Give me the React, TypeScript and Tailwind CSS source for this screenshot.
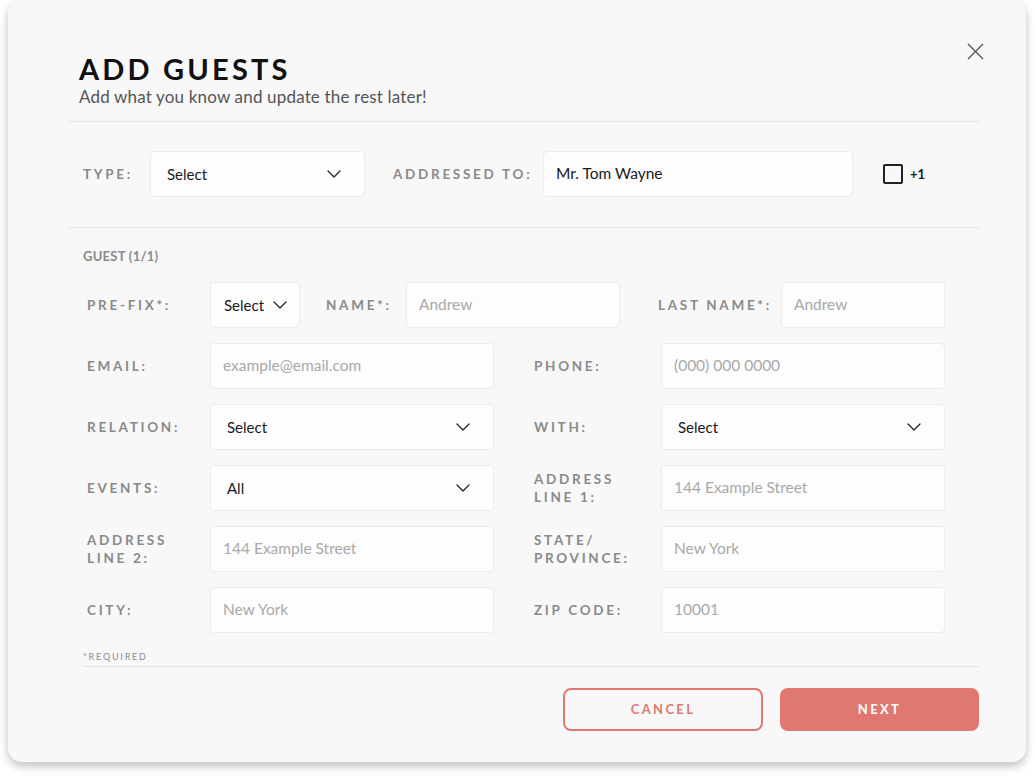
import React from "react";

const font = { fontFamily: "Lato, 'Open Sans', sans-serif" };

function Chevron() {
  return (
    <svg width="14" height="8" viewBox="0 0 14 8" fill="none" className="shrink-0">
      <path d="M1 1 L7 7 L13 1" stroke="#222" strokeWidth="1.3" strokeLinecap="round" strokeLinejoin="round" />
    </svg>
  );
}

function Label({ children, className = "" }: { children: React.ReactNode; className?: string }) {
  return (
    <div className={`text-[13.5px] font-bold tracking-[0.2em] leading-[18px] text-[#8a8a8a] shrink-0 ${className}`}>
      {children}
    </div>
  );
}

function SelectBox({ value, className = "", pad = "px-[16px]" }: { value: string; className?: string; pad?: string }) {
  return (
    <div className={`h-[46px] bg-[#fdfdfd] border border-[#ececec] rounded-[4px] flex items-center justify-between ${pad} pr-[23px] text-[15px] text-[#1a1a1a] shrink-0 ${className}`}>
      <span>{value}</span>
      <Chevron />
    </div>
  );
}

function InputBox({ value, placeholder = true, className = "" }: { value: string; placeholder?: boolean; className?: string }) {
  return (
    <div className={`h-[46px] bg-[#fdfdfd] border border-[#ececec] rounded-[4px] flex items-center px-[12px] text-[15.5px] shrink-0 ${placeholder ? "text-[#a9a9a9]" : "text-[#1a1a1a]"} ${className}`}>
      {value}
    </div>
  );
}

function Row({ children }: { children: React.ReactNode }) {
  return <div className="flex items-center h-[46px]">{children}</div>;
}

export default function App() {
  return (
    <div className="w-[1035px] h-[778px] bg-white" style={font}>
      <div className="relative ml-[8px] w-[1018px] h-[762px] bg-[#f8f8f8] rounded-[14px] shadow-[0_4px_10px_rgba(0,0,0,0.25)] flex flex-col">
        <button className="absolute top-[42px] right-[42px] w-[18px] h-[18px] flex items-center justify-center">
          <svg width="17" height="17" viewBox="0 0 17 17" fill="none">
            <path d="M1 1 L16 16 M16 1 L1 16" stroke="#555" strokeWidth="1.4" />
          </svg>
        </button>

        <div className="pl-[71px] pt-[52px]">
          <h1 className="text-[29px] leading-[34px] font-bold tracking-[0.11em] text-[#111]">ADD GUESTS</h1>
          <p className="text-[17px] leading-[20px] text-[#555] mt-[1px] tracking-[0.01em]">Add what you know and update the rest later!</p>
        </div>

        <div className="ml-[61px] w-[910px] h-px bg-[#e6e6e6] mt-[14px]" />

        <div className="flex items-center h-[46px] mt-[29px] pl-[75px]">
          <Label className="w-[67px]">TYPE:</Label>
          <SelectBox value="Select" className="w-[215px]" />
          <Label className="ml-[28px] w-[150px]">ADDRESSED TO:</Label>
          <InputBox value="Mr. Tom Wayne" placeholder={false} className="w-[310px]" />
          <div className="ml-[30px] w-[20px] h-[20px] border-2 border-[#222] rounded-[2px]" />
          <span className="ml-[7px] text-[13px] font-bold text-[#222] mt-[1px]">+1</span>
        </div>

        <div className="ml-[61px] w-[910px] h-px bg-[#e6e6e6] mt-[30px]" />

        <div className="pl-[75px] mt-[19px] text-[13px] font-bold text-[#8a8a8a] tracking-[0.02em] leading-[18px]">GUEST (1/1)</div>

        <div className="pl-[79px] mt-[17px] flex flex-col gap-[15px]">
          <Row>
            <Label className="w-[123px]">PRE-FIX*:</Label>
            <SelectBox value="Select" pad="pl-[13px]" className="w-[90px] !pr-[12px]" />
            <Label className="ml-[26px] w-[80px]">NAME*:</Label>
            <InputBox value="Andrew" className="w-[214px]" />
            <Label className="ml-[38px] w-[123px]">LAST NAME*:</Label>
            <InputBox value="Andrew" className="w-[164px]" />
          </Row>
          <Row>
            <Label className="w-[123px]">EMAIL:</Label>
            <InputBox value="example@email.com" className="w-[284px]" />
            <Label className="ml-[40px] w-[127px]">PHONE:</Label>
            <InputBox value="(000) 000 0000" className="w-[284px]" />
          </Row>
          <Row>
            <Label className="w-[123px]">RELATION:</Label>
            <SelectBox value="Select" className="w-[284px]" />
            <Label className="ml-[40px] w-[127px]">WITH:</Label>
            <SelectBox value="Select" className="w-[284px]" />
          </Row>
          <Row>
            <Label className="w-[123px]">EVENTS:</Label>
            <SelectBox value="All" className="w-[284px]" />
            <Label className="ml-[40px] w-[127px]">ADDRESS<br />LINE 1:</Label>
            <InputBox value="144 Example Street" className="w-[284px]" />
          </Row>
          <Row>
            <Label className="w-[123px]">ADDRESS<br />LINE 2:</Label>
            <InputBox value="144 Example Street" className="w-[284px]" />
            <Label className="ml-[40px] w-[127px]">STATE/<br />PROVINCE:</Label>
            <InputBox value="New York" className="w-[284px]" />
          </Row>
          <Row>
            <Label className="w-[123px]">CITY:</Label>
            <InputBox value="New York" className="w-[284px]" />
            <Label className="ml-[40px] w-[127px]">ZIP CODE:</Label>
            <InputBox value="10001" className="w-[284px]" />
          </Row>
        </div>

        <div className="pl-[75px] mt-[18px] text-[9px] leading-[12px] tracking-[0.2em] text-[#8a8a8a]">*REQUIRED</div>
        <div className="ml-[75px] w-[896px] h-px bg-[#e6e6e6] mt-[3px]" />

        <div className="flex justify-end gap-[17px] mt-[21px] pr-[47px]">
          <button className="w-[200px] h-[43px] rounded-[8px] border-2 border-[#e07870] text-[#e07870] text-[13px] font-bold tracking-[0.18em] flex items-center justify-center">
            CANCEL
          </button>
          <button className="w-[199px] h-[43px] rounded-[8px] bg-[#e07870] text-white text-[13px] font-bold tracking-[0.18em] flex items-center justify-center">
            NEXT
          </button>
        </div>
      </div>
    </div>
  );
}
